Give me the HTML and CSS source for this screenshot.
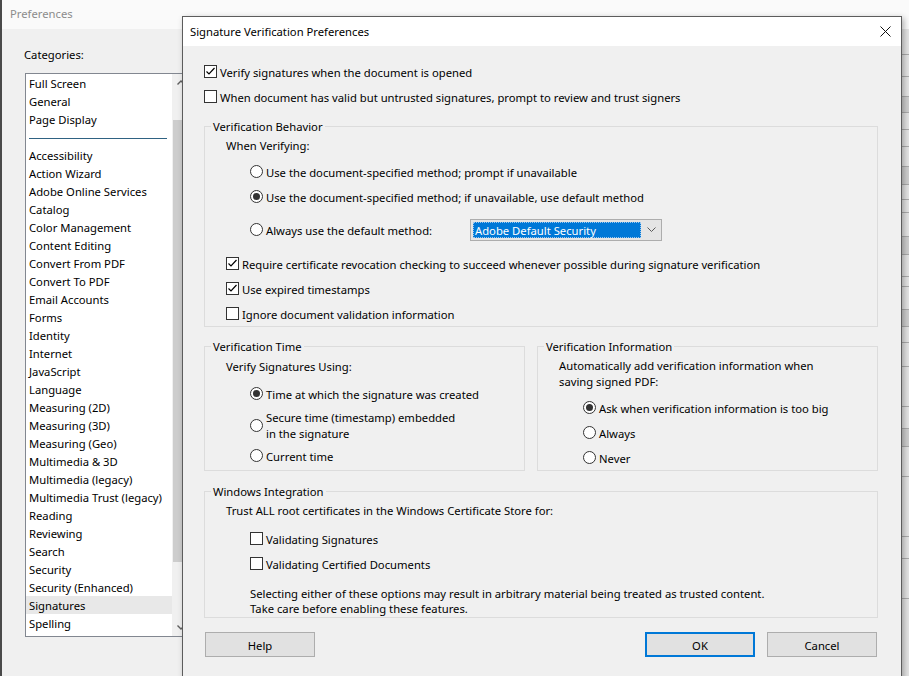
FILE: index.html
```html
<!DOCTYPE html>
<html>
<head>
<meta charset="utf-8">
<title>Signature Verification Preferences</title>
<link rel="stylesheet" href="styles.css">
</head>
<body>
<div class="prefs">
  <div class="prefs-title">Preferences</div>
  <div class="prefs-body">
    <div class="categories">
      <div class="cat-label">Categories:</div>
      <div class="cat-list">
        <div class="cat-items">
          <div class="cat-item">Full Screen</div>
          <div class="cat-item">General</div>
          <div class="cat-item">Page Display</div>
          <div class="cat-sep"><div class="cat-sep-line"></div></div>
          <div class="cat-item">Accessibility</div>
          <div class="cat-item">Action Wizard</div>
          <div class="cat-item">Adobe Online Services</div>
          <div class="cat-item">Catalog</div>
          <div class="cat-item">Color Management</div>
          <div class="cat-item">Content Editing</div>
          <div class="cat-item">Convert From PDF</div>
          <div class="cat-item">Convert To PDF</div>
          <div class="cat-item">Email Accounts</div>
          <div class="cat-item">Forms</div>
          <div class="cat-item">Identity</div>
          <div class="cat-item">Internet</div>
          <div class="cat-item">JavaScript</div>
          <div class="cat-item">Language</div>
          <div class="cat-item">Measuring (2D)</div>
          <div class="cat-item">Measuring (3D)</div>
          <div class="cat-item">Measuring (Geo)</div>
          <div class="cat-item">Multimedia &amp; 3D</div>
          <div class="cat-item">Multimedia (legacy)</div>
          <div class="cat-item">Multimedia Trust (legacy)</div>
          <div class="cat-item">Reading</div>
          <div class="cat-item">Reviewing</div>
          <div class="cat-item">Search</div>
          <div class="cat-item">Security</div>
          <div class="cat-item">Security (Enhanced)</div>
          <div class="cat-item selected">Signatures</div>
          <div class="cat-item">Spelling</div>
        </div>
        <div class="scrollbar">
          <div class="sb-arrow"><svg width="8" height="5" viewBox="0 0 8 5"><polyline points="0.5,4.5 4,1 7.5,4.5" fill="none" stroke="#606060" stroke-width="1.4"/></svg></div>
          <div class="sb-track"><div class="sb-thumb"></div></div>
          <div class="sb-arrow"><svg width="8" height="5" viewBox="0 0 8 5"><polyline points="0.5,0.5 4,4 7.5,0.5" fill="none" stroke="#606060" stroke-width="1.4"/></svg></div>
        </div>
      </div>
    </div>
    <div class="panel">
      <div class="prow" style="height:26px"></div>
      <div class="prow" style="height:22px"></div>
      <div class="prow" style="height:20px"></div>
      <div class="prow dark" style="height:16px"></div>
      <div class="prow" style="height:17px"></div>
      <div class="prow" style="height:17px"></div>
      <div class="prow" style="height:20px"></div>
      <div class="prow dark" style="height:18px"></div>
      <div class="prow" style="height:15px"></div>
      <div class="prow" style="height:13px"></div>
      <div class="prow" style="height:24px"></div>
      <div class="prow dark" style="height:18px"></div>
      <div class="prow" style="height:22px"></div>
      <div class="prow" style="height:10px"></div>
      <div class="prow" style="height:23px"></div>
      <div class="prow dark" style="height:17px"></div>
      <div class="prow" style="height:16px"></div>
      <div class="prow" style="height:24px"></div>
      <div class="prow" style="height:40px"></div>
      <div class="prow" style="height:22px"></div>
      <div class="prow dark" style="height:18px"></div>
      <div class="prow" style="height:30px"></div>
      <div class="prow" style="height:60px"></div>
      <div class="prow" style="height:22px"></div>
      <div class="prow" style="height:40px"></div>
    </div>
  </div>
</div>

<div class="dialog">
  <div class="dlg-title">
    <span class="dlg-title-text">Signature Verification Preferences</span>
    <svg class="close" width="11" height="11" viewBox="0 0 11 11"><path d="M0.5 0.5 L10.5 10.5 M10.5 0.5 L0.5 10.5" stroke="#111" stroke-width="1" fill="none"/></svg>
  </div>
  <div class="dlg-body">
    <div class="row">
      <span class="cb"><svg width="11" height="11" viewBox="0 0 11 11"><polyline points="1.5,5.5 4,8 9.5,2" fill="none" stroke="#000" stroke-width="1.2"/></svg></span>
      <span class="lbl">Verify signatures when the document is opened</span>
    </div>
    <div class="row">
      <span class="cb"></span>
      <span class="lbl">When document has valid but untrusted signatures, prompt to review and trust signers</span>
    </div>

    <div class="group behavior">
      <div class="group-title">Verification Behavior</div>
      <div class="text-line gap3">When Verifying:</div>
      <div class="row indent gap6">
        <span class="rb"></span>
        <span class="lbl">Use the document-specified method; prompt if unavailable</span>
      </div>
      <div class="row indent">
        <span class="rb on"></span>
        <span class="lbl">Use the document-specified method; if unavailable, use default method</span>
      </div>
      <div class="row indent gap8">
        <span class="rb"></span>
        <span class="lbl method-label">Always use the default method:</span>
        <div class="select">
          <div class="select-value">Adobe Default Security</div>
          <div class="select-arrow"><svg width="9" height="5" viewBox="0 0 9 5"><polyline points="0.5,0.5 4.5,4.5 8.5,0.5" fill="none" stroke="#5a5a5a" stroke-width="1"/></svg></div>
        </div>
      </div>
      <div class="row gap9">
        <span class="cb"><svg width="11" height="11" viewBox="0 0 11 11"><polyline points="1.5,5.5 4,8 9.5,2" fill="none" stroke="#000" stroke-width="1.2"/></svg></span>
        <span class="lbl">Require certificate revocation checking to succeed whenever possible during signature verification</span>
      </div>
      <div class="row">
        <span class="cb"><svg width="11" height="11" viewBox="0 0 11 11"><polyline points="1.5,5.5 4,8 9.5,2" fill="none" stroke="#000" stroke-width="1.2"/></svg></span>
        <span class="lbl">Use expired timestamps</span>
      </div>
      <div class="row">
        <span class="cb"></span>
        <span class="lbl">Ignore document validation information</span>
      </div>
    </div>

    <div class="two-col">
      <div class="group time">
        <div class="group-title">Verification Time</div>
        <div class="text-line gap4">Verify Signatures Using:</div>
        <div class="row indent gap7">
          <span class="rb on"></span>
          <span class="lbl">Time at which the signature was created</span>
        </div>
        <div class="row indent two-line gap3">
          <span class="rb"></span>
          <span class="lbl">Secure time (timestamp) embedded<br>in the signature</span>
        </div>
        <div class="row indent gap2">
          <span class="rb"></span>
          <span class="lbl">Current time</span>
        </div>
      </div>
      <div class="group info">
        <div class="group-title">Verification Information</div>
        <div class="text-line gap3">Automatically add verification information when<br>saving signed PDF:</div>
        <div class="row indent gap6">
          <span class="rb on"></span>
          <span class="lbl">Ask when verification information is too big</span>
        </div>
        <div class="row indent">
          <span class="rb"></span>
          <span class="lbl">Always</span>
        </div>
        <div class="row indent">
          <span class="rb"></span>
          <span class="lbl">Never</span>
        </div>
      </div>
    </div>

    <div class="group windows">
      <div class="group-title">Windows Integration</div>
      <div class="text-line gap3">Trust ALL root certificates in the Windows Certificate Store for:</div>
      <div class="row indent gap8">
        <span class="cb"></span>
        <span class="lbl">Validating Signatures</span>
      </div>
      <div class="row indent">
        <span class="cb"></span>
        <span class="lbl">Validating Certified Documents</span>
      </div>
      <div class="note">Selecting either of these options may result in arbitrary material being treated as trusted content.<br>Take care before enabling these features.</div>
    </div>

    <div class="buttons">
      <div class="btn help">Help</div>
      <div class="btn-group">
        <div class="btn default">OK</div>
        <div class="btn">Cancel</div>
      </div>
    </div>
  </div>
</div>
</body>
</html>
```

FILE: styles.css
```css
* { box-sizing: border-box; }
html, body { margin: 0; padding: 0; }
body {
  width: 909px;
  height: 676px;
  overflow: hidden;
  position: relative;
  font-family: "Noto Sans", "Open Sans", sans-serif;
  font-size: 11.25px;
  color: #000;
  background: #f0f0f0;
}

/* background Preferences window */
.prefs {
  width: 909px;
  height: 676px;
  border-left: 2px solid #4a4a4a;
  display: flex;
  flex-direction: column;
}
.prefs-title {
  height: 29px;
  line-height: 28px;
  padding-left: 8px;
  background: #fafafa;
  color: #8c8c8c;
}
.prefs-body {
  flex: 1;
  display: flex;
  background: #f0f0f0;
}
.categories {
  width: 195px;
  padding: 17px 0 0 23px;
  flex: none;
}
.cat-label {
  height: 16px;
  line-height: 16px;
  padding-top: 1px;
  margin-left: -1px;
  box-sizing: content-box;
  margin-bottom: -1px;
}
.cat-list {
  margin-top: 11px;
  width: 165px;
  height: 564px;
  border: 1px solid #828790;
  background: #fff;
  display: flex;
}
.cat-items {
  width: 146px;
  flex: none;
}
.cat-item {
  height: 18px;
  line-height: 16px;
  padding: 2px 0 0 3px;
  white-space: nowrap;
}
.cat-item.selected { background: #e8e8e8; }
.cat-sep {
  height: 18px;
  padding: 10px 0 0 3px;
}
.cat-sep-line {
  width: 138px;
  height: 1px;
  background: #2f6282;
}
.scrollbar {
  width: 17px;
  flex: none;
  display: flex;
  flex-direction: column;
  background: #f0f0f0;
}
.sb-arrow {
  height: 17px;
  display: flex;
  align-items: center;
  justify-content: center;
}
.sb-track {
  flex: 1;
  padding: 29px 1px 57px 1px;
}
.sb-thumb {
  height: 100%;
  background: #cdcdcd;
}
.panel {
  flex: 1;
  display: flex;
  flex-direction: column;
  background: #e4e4e4;
}
.prow {
  border-bottom: 1px solid #ababab;
  flex: none;
}
.prow.dark { background: #cfcfcf; }

/* dialog */
.dialog {
  position: absolute;
  left: 182px;
  top: 16px;
  width: 720px;
  height: 690px;
  border: 1px solid #5c5c5c;
  background: #f0f0f0;
  box-shadow: 2px 2px 6px rgba(0, 0, 0, 0.3);
}
.dlg-title {
  height: 29px;
  background: #fff;
  display: flex;
  align-items: center;
  justify-content: space-between;
  padding: 0 10px 0 7px;
}
.dlg-title-text { padding-top: 0; }
.dlg-body {
  padding: 13px 23px 0 21px;
}
.row {
  height: 25px;
  display: flex;
  align-items: center;
  white-space: nowrap;
}
.row.indent { padding-left: 24px; }
.row.two-line { height: 32px; line-height: 16px; }
.lbl { padding-top: 2px; }
.text-line {
  line-height: 16px;
  padding-top: 1px;
  margin-bottom: -1px;
}
.gap2 { margin-top: 2px; }
.gap3 { margin-top: 3px; }
.gap4 { margin-top: 4px; }
.gap6 { margin-top: 6px; }
.gap7 { margin-top: 7px; }
.gap8 { margin-top: 8px; }
.gap9 { margin-top: 9px; }

.cb {
  width: 13px;
  height: 13px;
  flex: none;
  border: 1px solid #333;
  background: #fff;
  margin-right: 3px;
  display: flex;
}
.rb {
  width: 13px;
  height: 13px;
  flex: none;
  border: 1px solid #333;
  border-radius: 50%;
  background: #fff;
  margin-right: 3px;
  display: flex;
  align-items: center;
  justify-content: center;
}
.rb.on::after {
  content: "";
  width: 7px;
  height: 7px;
  border-radius: 50%;
  background: #333;
}

.group {
  border: 1px solid #dcdcdc;
  padding-left: 21px;
}
.group-title {
  width: fit-content;
  margin: -9px 0 -1px -15px;
  padding: 1px 2px 0;
  line-height: 16px;
  background: #f0f0f0;
}
.behavior { margin-top: 17px; }
.method-label { width: 204px; flex: none; }
.select {
  width: 192px;
  height: 22px;
  flex: none;
  border: 1px solid #adadad;
  background: #e5e5e5;
  display: flex;
  padding: 2px 0 2px 2px;
}
.select-value {
  flex: 1;
  background: #0078d7;
  color: #fff;
  line-height: 16px;
  padding: 1px 0 0 2px;
  outline: 1px dotted #9ac6ee;
  outline-offset: -1px;
}
.select-arrow {
  width: 20px;
  flex: none;
  display: flex;
  align-items: center;
  justify-content: center;
}

.two-col {
  margin-top: 19px;
  display: grid;
  grid-template-columns: 321px 341px;
  column-gap: 12px;
}
.windows {
  margin-top: 20px;
  padding-bottom: 2px;
}
.note {
  margin-top: 9px;
  padding: 1px 0 0 24px;
  margin-bottom: -1px;
  line-height: 15px;
}

.buttons {
  margin-top: 14px;
  display: flex;
  justify-content: space-between;
  padding: 0 1px;
}
.btn-group {
  display: flex;
  gap: 12px;
}
.btn {
  width: 110px;
  height: 25px;
  padding-top: 1px;
  border: 1px solid #adadad;
  background: #e1e1e1;
  display: flex;
  align-items: center;
  justify-content: center;
}
.btn.default {
  border: 2px solid #0078d7;
  padding-top: 1px;
}
```
